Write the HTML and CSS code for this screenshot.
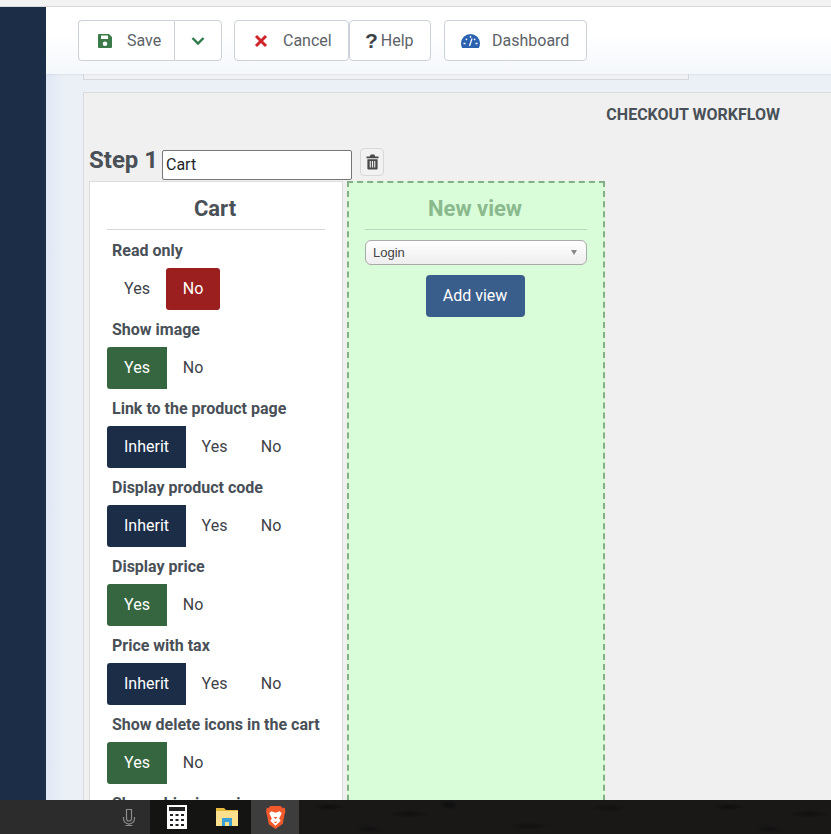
FILE: index.html
```html
<!DOCTYPE html>
<html lang="en">
<head>
<meta charset="utf-8">
<title>Checkout workflow</title>
<link rel="stylesheet" href="styles.css">
</head>
<body>
<div class="topstrip"></div>
<div class="app">
  <aside class="sidebar"></aside>
  <main class="main">
    <div class="toolbar">
      <div class="btn-split">
        <button class="tbtn tbtn-save">
          <svg class="ico" viewBox="0 0 16 16"><path class="g" d="M2 1h10l3 3v10a1 1 0 0 1-1 1H2a1 1 0 0 1-1-1V2a1 1 0 0 1 1-1zm2 1.500v3.500h7V2.500zM8 8.500a2.300 2.300 0 1 0 0 4.600 2.300 2.300 0 0 0 0-4.600z"/></svg>
          <span>Save</span>
        </button>
        <button class="tbtn tbtn-caret">
          <svg class="ico" viewBox="0 0 16 16"><path class="gs" d="M2.500 5l5.500 5.500L13.500 5"/></svg>
        </button>
      </div>
      <div class="btn-pair">
        <button class="tbtn tbtn-cancel">
          <svg class="ico" viewBox="0 0 16 16"><path class="rs" d="M3 3l10 10M13 3L3 13"/></svg>
          <span>Cancel</span>
        </button>
        <button class="tbtn tbtn-help"><b class="q">?</b><span>Help</span></button>
      </div>
      <button class="tbtn tbtn-dash">
        <svg class="ico ico-dash" viewBox="0 0 19 14"><path class="b" d="M9.500 0A9.500 9.500 0 0 0 0 9.500c0 1.700.4 3.200 1.200 4.500h16.600c.8-1.300 1.200-2.800 1.200-4.500A9.500 9.500 0 0 0 9.500 0z"/><path class="ws" d="M8.500 12L11 4.500M2.500 9.500h2M14.500 9.500h2M4.800 4.800l1.200 1.200M9.500 1.800v2M14.200 4.800L13 6"/></svg>
        <span>Dashboard</span>
      </button>
    </div>
    <div class="content">
      <div class="prev-card"></div>
      <section class="workflow">
        <h2 class="wf-title">CHECKOUT WORKFLOW</h2>
        <div class="step-head">
          <span class="step-name">Step 1</span>
          <input class="step-input" type="text" value="Cart">
          <button class="trash" aria-label="Delete">
            <svg viewBox="0 0 14 16" class="trash-ico"><path d="M5 0h4l1 2h3.500v2H.5V2H4zM1.500 5h11v10a1 1 0 0 1-1 1h-9a1 1 0 0 1-1-1zM4 7v7h1.200V7zm2.400 0v7h1.200V7zM8.800 7v7H10V7z"/></svg>
          </button>
        </div>
        <div class="views">
          <div class="view">
            <h3 class="view-title">Cart</h3>
            <div class="opt"><div class="opt-label">Read only</div>
              <div class="toggle"><span class="t t-yes">Yes</span><span class="t on-red">No</span></div></div>
            <div class="opt"><div class="opt-label">Show image</div>
              <div class="toggle"><span class="t t-yes on-green">Yes</span><span class="t t-no">No</span></div></div>
            <div class="opt"><div class="opt-label">Link to the product page</div>
              <div class="toggle"><span class="t t-inh on-navy">Inherit</span><span class="t t-y3">Yes</span><span class="t t-n3">No</span></div></div>
            <div class="opt"><div class="opt-label">Display product code</div>
              <div class="toggle"><span class="t t-inh on-navy">Inherit</span><span class="t t-y3">Yes</span><span class="t t-n3">No</span></div></div>
            <div class="opt"><div class="opt-label">Display price</div>
              <div class="toggle"><span class="t t-yes on-green">Yes</span><span class="t t-no">No</span></div></div>
            <div class="opt"><div class="opt-label">Price with tax</div>
              <div class="toggle"><span class="t t-inh on-navy">Inherit</span><span class="t t-y3">Yes</span><span class="t t-n3">No</span></div></div>
            <div class="opt"><div class="opt-label">Show delete icons in the cart</div>
              <div class="toggle"><span class="t t-yes on-green">Yes</span><span class="t t-no">No</span></div></div>
            <div class="opt"><div class="opt-label">Show shipping price</div></div>
          </div>
          <div class="newview">
            <h3 class="view-title nv-title">New view</h3>
            <div class="select"><span>Login</span><i class="arrow"></i></div>
            <button class="add-view">Add view</button>
          </div>
        </div>
      </section>
    </div>
  </main>
</div>
<footer class="taskbar">
  <div class="tb-search">
    <svg class="tb-mic" viewBox="0 0 14 18"><path d="M4.500 1.500h5v9a2.500 2.500 0 0 1-5 0zM1.500 9v1.500a5.500 5.500 0 0 0 11 0V9M7 16v1.500M3.500 17.500h7"/></svg>
  </div>
  <div class="tb-apps">
    <div class="tb-app">
      <svg class="tb-ico" viewBox="0 0 20 24"><rect width="20" height="24" fill="#fff"/><rect x="2" y="2" width="16" height="4" fill="#222"/><g fill="#222"><rect x="3" y="9" width="3" height="2"/><rect x="8.500" y="9" width="3" height="2"/><rect x="14" y="9" width="3" height="2"/><rect x="3" y="14" width="3" height="2"/><rect x="8.500" y="14" width="3" height="2"/><rect x="14" y="14" width="3" height="2"/><rect x="3" y="19" width="3" height="2"/><rect x="8.500" y="19" width="3" height="2"/><rect x="14" y="19" width="3" height="2"/></g></svg>
    </div>
    <div class="tb-app">
      <svg class="tb-ico tb-folder" viewBox="0 0 24 20"><path fill="#e8b93f" d="M1 1h8l2 2h12v3H1z"/><path fill="#fbe08e" d="M1 4h22v15H1z"/><path fill="#3b9fd8" d="M7 11h10v8h-3v-4h-4v4H7z"/></svg>
    </div>
    <div class="tb-app tb-active">
      <svg class="tb-ico tb-brave" viewBox="0 0 20 24"><path fill="#f1582b" d="M5 1h10l2 2 2-.5.5 4-1 3.500-1.500 8L10 23l-6.500-4.500L2 10.500 1 7l.5-4.500L3 3z"/><path fill="#fff" d="M6 6l4 1.500L14 6l2 2-2.500 5 1.500 2-5 5-5-5 1.500-2L4 8z"/><path fill="#f1582b" d="M8 11.500h4l-2 2zM8 16h4l-2 1.500z"/></svg>
    </div>
  </div>
  <div class="tb-rest"></div>
</footer>
</body>
</html>
```
FILE: styles.css
```css
* { box-sizing: border-box; }
html, body { margin: 0; padding: 0; height: 100%; }
body {
  width: 831px;
  height: 834px;
  display: flex;
  flex-direction: column;
  overflow: hidden;
  font-family: Roboto, "Liberation Sans", sans-serif;
  color: #495057;
  background: #fff;
}
.topstrip { height: 7px; flex: none; background: #f2f2f2; border-bottom: 1px solid #d8d8d8; }
.app { flex: 1; min-height: 0; display: flex; overflow: hidden; }
.sidebar { width: 46px; flex: none; background: #1c2d48; }
.main { flex: 1; min-width: 0; display: flex; flex-direction: column; background: linear-gradient(90deg, #dfe7f5 0, #ebf0f6 16px); overflow: hidden; }

.toolbar {
  height: 67px; flex: none;
  display: flex; align-items: center;
  padding: 0 0 0 32px;
  background: linear-gradient(180deg, #fff 0, #fff 40%, #f4f7fb 100%);
  box-shadow: 0 1px 2px rgba(0,0,0,.06);
  position: relative; z-index: 1;
}
.btn-split, .btn-pair { display: flex; }
.btn-split { margin-right: 12px; }
.btn-pair { margin-right: 13px; }
.tbtn {
  height: 41px;
  display: flex; align-items: center;
  padding: 0;
  background: #fff;
  border: 1px solid #ccd2da;
  border-radius: 4px;
  font: 400 16px Roboto, sans-serif;
  color: #5c6268;
}
.ico { width: 16px; height: 16px; flex: none; }
.tbtn-save { width: 96px; padding-left: 18px; gap: 14px; border-radius: 4px 0 0 4px; border-right: 0; }
.tbtn-caret { width: 48px; justify-content: center; border-radius: 0 4px 4px 0; }
.tbtn-cancel { width: 115px; padding-left: 18px; gap: 14px; }
.tbtn-help { width: 82px; padding-left: 15px; gap: 3px; }
.tbtn-dash { width: 143px; padding-left: 16px; gap: 12px; }
.ico-dash { width: 19px; height: 14px; }
.q { font: 700 21px "Liberation Sans", sans-serif; color: #3d4247; }
.g { fill: #3c7a4a; fill-rule: evenodd; }
.gs { fill: none; stroke: #2f7a4b; stroke-width: 2.400; }
.rs { fill: none; stroke: #d0242b; stroke-width: 3; }
.b { fill: #2a62b0; }
.ws { fill: none; stroke: #fff; stroke-width: 1.300; }

.content { flex: 1; min-height: 0; padding: 0 0 0 37px; overflow: hidden; }
.prev-card { width: 606px; height: 6px; background: #f0f2f5; border: 1px solid #d5d8dc; border-top: 0; }
.workflow {
  margin-top: 12px;
  min-height: 720px;
  background: #f0f0f0;
  border: 1px solid #d8dadd;
  border-right: 0;
  padding: 0 0 0 5px;
}
.wf-title { margin: 0; padding: 12px 51px 0 0; text-align: right; font: 700 16px/19px Roboto, sans-serif; color: #495057; }
.step-head { display: flex; align-items: flex-start; margin-top: 26px; height: 32px; }
.step-name { font: 700 24px/32px Roboto, sans-serif; margin: -6px 0 0 0; width: 73px; white-space: nowrap; }
.step-input {
  width: 190px; height: 30px; margin-top: 0;
  border: 1px solid #767676; border-radius: 2px;
  padding: 0 3px 2px; font: 400 16px Roboto, sans-serif; color: #212529; background: #fff;
}
.trash {
  width: 24px; height: 28px; margin: -2px 0 0 8px; padding: 0;
  background: #f2f2f2; border: 1px solid #d8d8d8; border-radius: 4px;
  display: flex; align-items: center; justify-content: center;
}
.trash-ico { width: 13px; height: 16px; fill: #4a4a4a; fill-rule: evenodd; }
.views { display: flex; align-items: stretch; gap: 4px; height: 640px; margin-top: -1px; }
.view { width: 254px; background: #fff; border: 1px solid #dcdcdc; padding: 0 17px; }
.view-title {
  margin: 0 0 11px; height: 48px; padding: 14px 2px 0 0;
  border-bottom: 1px solid #d4d6d8;
  text-align: center; font: 700 22px/26px Roboto, sans-serif; color: #495057;
}
.opt { height: 79px; }
.opt-label { font: 700 16px/19px Roboto, sans-serif; padding-left: 5px; margin-bottom: 8px; white-space: nowrap; }
.toggle { display: flex; height: 42px; }
.t { display: flex; align-items: center; justify-content: center; padding-bottom: 2px; font: 400 16px Roboto, sans-serif; color: #3d4247; border-radius: 3px; }
.t-yes { width: 60px; }
.t-no { width: 52px; }
.t-inh { width: 79px; }
.t-y3 { width: 57px; }
.t-n3 { width: 56px; }
.on-red { width: 54px; margin-left: -1px; background: #9c1f1f; color: #fff; }
.on-green { background: #356640; color: #fff; border-radius: 3px 0 0 3px; }
.on-navy { background: #1c2d48; color: #fff; border-radius: 3px 0 0 3px; }

.newview {
  width: 258px;
  background: #d8fdd8;
  border: 2px dashed #84b088;
  padding: 0 16px;
  display: flex; flex-direction: column;
}
.nv-title { height: 47px; margin-bottom: 12px; padding-top: 13px; color: #8ab98e; border-bottom-color: #bcd9bf; align-self: stretch; }
.select {
  height: 25px; margin-top: -2px;
  display: flex; align-items: center; justify-content: space-between;
  padding: 0 9px 0 7px;
  background: linear-gradient(180deg, #fff 0, #eee 100%);
  border: 1px solid #aaa; border-radius: 6px;
  font: 400 13px "Liberation Sans", sans-serif; color: #444;
}
.arrow { width: 0; height: 0; border: 3.500px solid transparent; border-top: 5px solid #888; border-bottom: 0; }
.add-view {
  align-self: center; margin: 10px 2px 0 0;
  width: 99px; height: 42px; padding: 0 0 2px;
  background: #3a5e8c; color: #fff; border: 0; border-radius: 4px;
  font: 400 16px Roboto, sans-serif;
}

.taskbar { height: 34px; flex: none; display: flex; background: #141414; }
.tb-search { width: 150px; flex: none; background: #2c2c2c; display: flex; align-items: center; justify-content: flex-end; padding-right: 14px; }
.tb-mic { width: 14px; height: 18px; fill: none; stroke: #8c8c8c; stroke-width: 1.200; }
.tb-apps { display: flex; flex: none; background: #141413; }
.tb-app { width: 48px; display: flex; align-items: center; justify-content: center; }
.tb-app:first-child { width: 53px; }
.tb-active { background: #3d3d3d; }
.tb-ico { width: 20px; height: 24px; }
.tb-folder { width: 24px; height: 20px; }
.tb-brave { width: 21px; height: 25px; }
.tb-rest {
  flex: 1;
  background-color: #191817;
  background-image:
    radial-gradient(ellipse 16px 4px at 30px 7px, #0e0e0e, transparent),
    radial-gradient(ellipse 22px 4px at 110px 14px, #101010, transparent),
    radial-gradient(ellipse 10px 5px at 150px 5px, #0e0e0e, transparent),
    radial-gradient(ellipse 24px 4px at 230px 26px, #111, transparent),
    radial-gradient(ellipse 18px 4px at 310px 8px, #101010, transparent),
    radial-gradient(ellipse 14px 4px at 70px 29px, #111, transparent);
  background-size: 400px 34px;
}
```
